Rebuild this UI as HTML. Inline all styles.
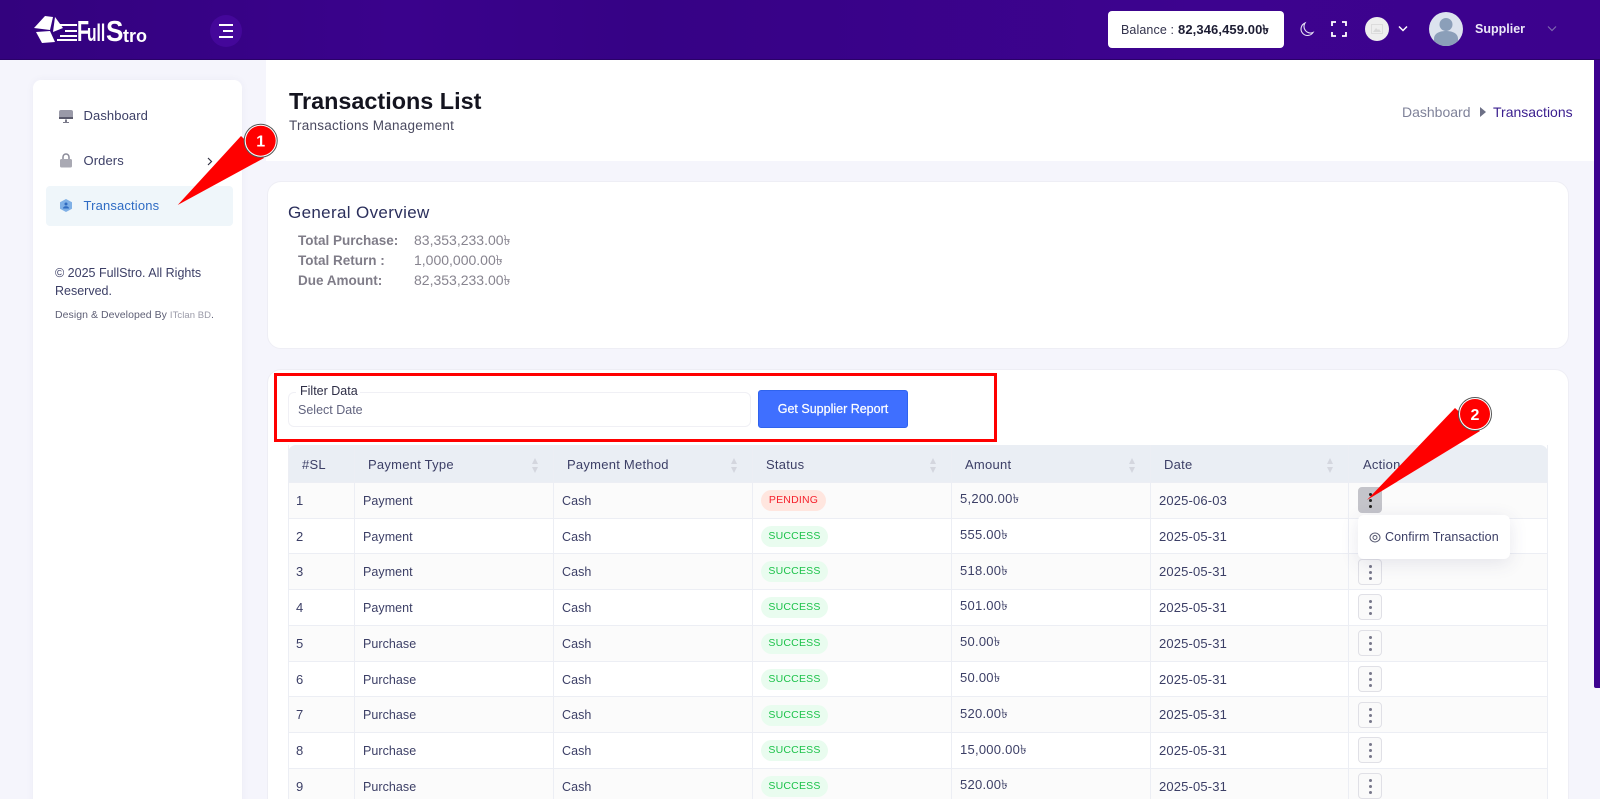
<!DOCTYPE html>
<html lang="en"><head><meta charset="utf-8"><title>Transactions List</title>
<style>
*{box-sizing:border-box}
html,body{margin:0;padding:0;width:1600px;height:799px;overflow:hidden;background:#f5f5fc}
#w{position:relative;width:1600px;height:799px;overflow:hidden;background:#f5f5fc;font-family:"Liberation Sans","Noto Sans CJK SC",sans-serif;color:#3c3f66}
.a{position:absolute;white-space:nowrap}
.t{position:absolute;white-space:nowrap;line-height:16px;font-size:13px;letter-spacing:.25px}
.c{position:absolute;white-space:nowrap;line-height:16px;font-size:12.5px;letter-spacing:.05px}
.d{position:absolute;white-space:nowrap;line-height:16px;font-size:13px;letter-spacing:.15px}
.card{position:absolute;background:#fff;border:1px solid #eeeef5;border-radius:14px}
#hdr{position:absolute;left:0;top:0;width:1600px;height:60px;background:linear-gradient(90deg,#33027e 0,#3a028c 25%,#360285 40%,#3d038f 75%,#3c028d 100%);border-bottom:1px solid #2a0168}
.h{position:absolute;top:446px;height:37px;line-height:37px;font-size:13px;letter-spacing:.25px;color:#3c3f66;white-space:nowrap}
.r{position:absolute;left:288px;width:1260px;height:37px;border-top:1px solid #eceef4}
.v{position:absolute;top:445px;width:1px;height:354px;background:#eceef4}
.b{position:absolute;height:21px;line-height:20px;border-radius:11px;font-size:10.5px;letter-spacing:.2px;text-align:center}
.s{left:761px;width:67px;background:#e9fcef;color:#1cc24a}
.p{left:761px;width:65px;background:#ffe6df;color:#f5222d}
.btn{position:absolute;left:1358px;width:24px;height:26px;background:#fafafa;border:1px solid #e0e0e6;border-radius:4px}
.btn i{position:absolute;left:9.5px;width:3px;height:3px;border-radius:50%;background:#77778a}
.up{position:absolute;width:0;height:0;border-left:3.5px solid transparent;border-right:3.5px solid transparent;border-bottom:6px solid #d4d6de}
.dn{position:absolute;width:0;height:0;border-left:3.5px solid transparent;border-right:3.5px solid transparent;border-top:6px solid #d4d6de}
.l{position:absolute;line-height:40px;color:#fff;font-weight:bold;white-space:nowrap;transform-origin:0 50%}
</style></head><body>
<div id="w">

<div id="hdr"></div>
<svg class="a" style="left:33px;top:14px" width="46" height="30" viewBox="0 0 46 30">
<path d="M1 14L12 2l8 1-3 13z" fill="#fff"/><path d="M22 3l8 11-10 4z" fill="#fff"/><path d="M3 18l14-1 5 11-13 1z" fill="#fff"/>
<path d="M27 10h17v2H27zM32 16h12v2H32zM27 21h17v2H27zM24 25h20v2H24z" fill="#fff"/></svg>
<div class="l" style="left:77px;top:12px;font-size:29px;transform:scaleX(.68)">F</div>
<div class="l" style="left:87px;top:14px;font-size:24px;transform:scaleX(.65)">ull</div>
<div class="l" style="left:106px;top:12px;font-size:29px;transform:scaleX(.9)">S</div>
<div class="l" style="left:123px;top:16px;font-size:18px">tro</div>
<div class="a" style="left:210px;top:15px;width:32px;height:32px;border-radius:50%;background:#44079a"></div>
<div class="a" style="left:219px;top:24px;width:14px;height:2px;background:#fff"></div>
<div class="a" style="left:223px;top:30px;width:10px;height:2px;background:#fff"></div>
<div class="a" style="left:219px;top:36px;width:14px;height:2px;background:#fff"></div>

<div class="a" style="left:1108px;top:11px;width:176px;height:37px;background:#fff;border-radius:4px"></div>
<div class="t" style="left:1121px;top:22px;color:#33334d;font-size:12.5px;letter-spacing:.1px">Balance :</div>
<div class="t" style="left:1178px;top:22px;color:#1d1d33;font-size:13px;font-weight:bold;letter-spacing:.1px">82,346,459.00৳</div>
<svg class="a" style="left:1299px;top:21px" width="16" height="16" viewBox="0 0 16 16"><path d="M6 2a6.500 6.500 0 0 0 8 9.500A6.500 6.500 0 1 1 6 2z" fill="none" stroke="#e8e4f5" stroke-width="1.100"/></svg>
<svg class="a" style="left:1331px;top:21px" width="16" height="16" viewBox="0 0 16 16"><path d="M1 5V1h4M11 1h4v4M15 11v4h-4M5 15H1v-4" fill="none" stroke="#fff" stroke-width="1.800"/></svg>
<div class="a" style="left:1365px;top:17px;width:24px;height:24px;border-radius:50%;background:#eeeeee"></div>
<svg class="a" style="left:1371px;top:23px" width="12" height="12" viewBox="0 0 12 12"><rect x=".5" y="1.500" width="11" height="9" fill="none" stroke="#dcdcdc"/><path d="M2 9l3-4 2 2 1-1 2 3z" fill="#d8d8d8"/></svg>
<svg class="a" style="left:1397px;top:25px" width="12" height="8" viewBox="0 0 12 8"><path d="M2 1.500l4 4 4-4" fill="none" stroke="#fff" stroke-width="1.500"/></svg>
<svg class="a" style="left:1429px;top:12px" width="34" height="34" viewBox="0 0 34 34"><defs><clipPath id="c"><circle cx="17" cy="17" r="17"/></clipPath></defs><circle cx="17" cy="17" r="17" fill="#dce3ee"/><g clip-path="url(#c)" fill="#8b9fb9"><circle cx="17" cy="12.500" r="6.500"/><path d="M5 34v-7c0-6 6-8 12-8s12 2 12 8v7z"/></g></svg>
<div class="t" style="left:1475px;top:21px;color:#ece8f8;font-weight:bold;font-size:12.500px;letter-spacing:0">Supplier</div>
<svg class="a" style="left:1546px;top:25px" width="12" height="8" viewBox="0 0 12 8"><path d="M2 1.500l4 4 4-4" fill="none" stroke="#7f68b0" stroke-width="1.200"/></svg>

<div class="a" style="left:33px;top:80px;width:209px;height:730px;background:#fff;border-radius:8px;box-shadow:0 0 8px rgba(60,60,110,.05)"></div>
<svg class="a" style="left:59px;top:110px" width="14" height="14" viewBox="0 0 14 14"><rect x="0" y="0" width="14" height="9" rx="2" fill="#9a9aa8"/><rect x="0" y="7" width="14" height="2" fill="#5a5a6c"/><path d="M6 9.500h2V12h2v1H4v-1h2z" fill="#7a7a8a"/></svg>
<div class="t" style="left:83.500px;top:108px;font-size:13px;letter-spacing:.1px">Dashboard</div>
<svg class="a" style="left:60px;top:153px" width="12" height="15" viewBox="0 0 12 15"><path d="M3 7V4a3 3 0 0 1 6 0v3" fill="none" stroke="#8a8a98" stroke-width="1.500"/><rect x="0" y="6" width="12" height="8.500" rx="1.500" fill="#a9a9b3"/></svg>
<div class="t" style="left:83.500px;top:153px;font-size:13px;letter-spacing:.1px">Orders</div>
<svg class="a" style="left:206px;top:157px" width="8" height="9" viewBox="0 0 8 9"><path d="M2 1l3.500 3.500L2 8" fill="none" stroke="#333344" stroke-width="1.200"/></svg>
<div class="a" style="left:46px;top:186px;width:187px;height:40px;background:#eff6fa;border-radius:4px"></div>
<svg class="a" style="left:60px;top:199px" width="12" height="13" viewBox="0 0 12 13"><path d="M6 0l6 3.200v6.600L6 13 0 9.800V3.200z" fill="#7fb0e6"/><circle cx="6" cy="5" r="1.500" fill="#2f6bc0"/><path d="M3 9.500c0-1.500 1.500-2.200 3-2.200s3 .7 3 2.200z" fill="#2f6bc0"/></svg>
<div class="t" style="left:83.500px;top:198px;color:#2f6cc4;font-size:13px;letter-spacing:.15px">Transactions</div>
<div class="t" style="left:55px;top:265px;font-size:12.500px;letter-spacing:0">© 2025 FullStro. All Rights</div>
<div class="t" style="left:55px;top:283px;font-size:12.500px;letter-spacing:0">Reserved.</div>
<div class="t" style="left:55px;top:307px;font-size:10.500px;letter-spacing:.05px;color:#5f6076">Design &amp; Developed By <span style="color:#9a9aa8;font-size:9.500px">ITclan BD</span>.</div>

<div class="a" style="left:266px;top:60px;width:1328px;height:101px;background:#fff"></div>
<div class="a" style="left:289px;top:85px;font-size:23.400px;line-height:32px;font-weight:bold;color:#14141f">Transactions List</div>
<div class="t" style="left:289px;top:118px;font-size:13.500px;letter-spacing:.25px;color:#4a4a60">Transactions Management</div>
<div class="t" style="left:1402px;top:104px;font-size:14px;color:#7f8299;letter-spacing:0">Dashboard</div>
<div class="a" style="left:1480px;top:107px;width:0;height:0;border-left:6px solid #6d7086;border-top:5px solid transparent;border-bottom:5px solid transparent"></div>
<div class="t" style="left:1493px;top:104px;font-size:14px;color:#3a1e8e;letter-spacing:0">Transactions</div>

<div class="card" style="left:267px;top:181px;width:1302px;height:168px"></div>
<div class="t" style="left:288px;top:204px;font-size:17px;line-height:17px;color:#2b2f5c;letter-spacing:.35px">General Overview</div>
<div class="t" style="left:298px;top:233px;font-size:13.500px;font-weight:bold;color:#7f7c88;letter-spacing:0">Total Purchase:</div>
<div class="t" style="left:414px;top:232px;font-size:14px;color:#87848f;letter-spacing:0">83,353,233.00৳</div>
<div class="t" style="left:298px;top:253px;font-size:13.500px;font-weight:bold;color:#7f7c88;letter-spacing:0">Total Return :</div>
<div class="t" style="left:414px;top:252px;font-size:14px;color:#87848f;letter-spacing:0">1,000,000.00৳</div>
<div class="t" style="left:298px;top:273px;font-size:13.500px;font-weight:bold;color:#7f7c88;letter-spacing:0">Due Amount:</div>
<div class="t" style="left:414px;top:272px;font-size:14px;color:#87848f;letter-spacing:0">82,353,233.00৳</div>

<div class="card" style="left:267px;top:369px;width:1302px;height:450px"></div>
<div class="a" style="left:288px;top:392px;width:463px;height:35px;border:1px solid #f0f0f5;border-radius:6px"></div>
<div class="a" style="left:296px;top:385px;width:64px;height:12px;background:#fff"></div>
<div class="t" style="left:300px;top:383px;font-size:12.500px;color:#2d2d45;letter-spacing:0">Filter Data</div>
<div class="t" style="left:298px;top:402px;font-size:12.500px;color:#62647f;letter-spacing:0">Select Date</div>
<div class="a" style="left:758px;top:390px;width:150px;height:38px;background:#3f6fff;border-radius:3px;border:1px solid #2f63ee;color:#fff;font-size:12.500px;-webkit-text-stroke:.2px #fff;text-align:center;line-height:36px">Get Supplier Report</div>
<div class="a" style="left:274px;top:373px;width:723px;height:69px;border:3px solid #ff0000"></div>

<div class="a" style="left:288px;top:445px;width:1260px;height:37px;background:#eaeef4;border-radius:8px 8px 0 0"></div>
<div class="r" style="top:482px;background:#fbfbfb"></div>
<div class="r" style="top:518px;background:#fff"></div>
<div class="r" style="top:553px;background:#fbfbfb"></div>
<div class="r" style="top:589px;background:#fff"></div>
<div class="r" style="top:625px;background:#fbfbfb"></div>
<div class="r" style="top:661px;background:#fff"></div>
<div class="r" style="top:696px;background:#fbfbfb"></div>
<div class="r" style="top:732px;background:#fff"></div>
<div class="r" style="top:768px;background:#fbfbfb"></div>
<div class="v" style="left:288px"></div><div class="v" style="left:354px"></div><div class="v" style="left:553px"></div><div class="v" style="left:752px"></div><div class="v" style="left:951px"></div><div class="v" style="left:1150px"></div><div class="v" style="left:1348px"></div><div class="v" style="left:1547px"></div>

<div class="h" style="left:302px">#SL</div>
<div class="h" style="left:368px">Payment Type</div>
<div class="h" style="left:567px">Payment Method</div>
<div class="h" style="left:766px">Status</div>
<div class="h" style="left:965px">Amount</div>
<div class="h" style="left:1164px">Date</div>
<div class="h" style="left:1363px">Action</div>
<div class="up" style="left:532px;top:458px"></div><div class="dn" style="left:532px;top:467px"></div>
<div class="up" style="left:731px;top:458px"></div><div class="dn" style="left:731px;top:467px"></div>
<div class="up" style="left:930px;top:458px"></div><div class="dn" style="left:930px;top:467px"></div>
<div class="up" style="left:1129px;top:458px"></div><div class="dn" style="left:1129px;top:467px"></div>
<div class="up" style="left:1327px;top:458px"></div><div class="dn" style="left:1327px;top:467px"></div>

<div class="d" style="left:296px;top:493px">1</div><div class="c" style="left:363px;top:493px">Payment</div><div class="c" style="left:562px;top:493px">Cash</div><div class="b p" style="top:490px">PENDING</div><div class="t" style="left:960px;top:491px">5,200.00৳</div><div class="d" style="left:1159px;top:493px">2025-06-03</div>
<div class="d" style="left:296px;top:529px">2</div><div class="c" style="left:363px;top:529px">Payment</div><div class="c" style="left:562px;top:529px">Cash</div><div class="b s" style="top:526px">SUCCESS</div><div class="t" style="left:960px;top:527px">555.00৳</div><div class="d" style="left:1159px;top:529px">2025-05-31</div>
<div class="d" style="left:296px;top:564px">3</div><div class="c" style="left:363px;top:564px">Payment</div><div class="c" style="left:562px;top:564px">Cash</div><div class="b s" style="top:561px">SUCCESS</div><div class="t" style="left:960px;top:563px">518.00৳</div><div class="d" style="left:1159px;top:564px">2025-05-31</div>
<div class="d" style="left:296px;top:600px">4</div><div class="c" style="left:363px;top:600px">Payment</div><div class="c" style="left:562px;top:600px">Cash</div><div class="b s" style="top:597px">SUCCESS</div><div class="t" style="left:960px;top:598px">501.00৳</div><div class="d" style="left:1159px;top:600px">2025-05-31</div>
<div class="d" style="left:296px;top:636px">5</div><div class="c" style="left:363px;top:636px">Purchase</div><div class="c" style="left:562px;top:636px">Cash</div><div class="b s" style="top:633px">SUCCESS</div><div class="t" style="left:960px;top:634px">50.00৳</div><div class="d" style="left:1159px;top:636px">2025-05-31</div>
<div class="d" style="left:296px;top:672px">6</div><div class="c" style="left:363px;top:672px">Purchase</div><div class="c" style="left:562px;top:672px">Cash</div><div class="b s" style="top:669px">SUCCESS</div><div class="t" style="left:960px;top:670px">50.00৳</div><div class="d" style="left:1159px;top:672px">2025-05-31</div>
<div class="d" style="left:296px;top:707px">7</div><div class="c" style="left:363px;top:707px">Purchase</div><div class="c" style="left:562px;top:707px">Cash</div><div class="b s" style="top:705px">SUCCESS</div><div class="t" style="left:960px;top:706px">520.00৳</div><div class="d" style="left:1159px;top:707px">2025-05-31</div>
<div class="d" style="left:296px;top:743px">8</div><div class="c" style="left:363px;top:743px">Purchase</div><div class="c" style="left:562px;top:743px">Cash</div><div class="b s" style="top:740px">SUCCESS</div><div class="t" style="left:960px;top:742px">15,000.00৳</div><div class="d" style="left:1159px;top:743px">2025-05-31</div>
<div class="d" style="left:296px;top:779px">9</div><div class="c" style="left:363px;top:779px">Purchase</div><div class="c" style="left:562px;top:779px">Cash</div><div class="b s" style="top:776px">SUCCESS</div><div class="t" style="left:960px;top:777px">520.00৳</div><div class="d" style="left:1159px;top:779px">2025-05-31</div>

<div class="btn" style="top:487px;background:#c4c4ca;border-color:#c4c4ca"><i style="top:5px;background:#222"></i><i style="top:11px;background:#222"></i><i style="top:17px;background:#222"></i></div>
<div class="btn" style="top:559px"><i style="top:5px"></i><i style="top:11px"></i><i style="top:17px"></i></div>
<div class="btn" style="top:594px"><i style="top:5px"></i><i style="top:11px"></i><i style="top:17px"></i></div>
<div class="btn" style="top:630px"><i style="top:5px"></i><i style="top:11px"></i><i style="top:17px"></i></div>
<div class="btn" style="top:666px"><i style="top:5px"></i><i style="top:11px"></i><i style="top:17px"></i></div>
<div class="btn" style="top:702px"><i style="top:5px"></i><i style="top:11px"></i><i style="top:17px"></i></div>
<div class="btn" style="top:737px"><i style="top:5px"></i><i style="top:11px"></i><i style="top:17px"></i></div>
<div class="btn" style="top:773px"><i style="top:5px"></i><i style="top:11px"></i><i style="top:17px"></i></div>

<div class="a" style="left:1358px;top:515px;width:152px;height:44px;background:#fff;border-radius:6px;box-shadow:0 4px 18px rgba(60,60,110,.12)"></div>
<svg class="a" style="left:1369px;top:532px" width="12" height="11" viewBox="0 0 12 11"><ellipse cx="6" cy="5.500" rx="5" ry="4.500" fill="none" stroke="#555870" stroke-width="1"/><circle cx="6" cy="5.500" r="2" fill="none" stroke="#555870" stroke-width="1"/></svg>
<div class="t" style="left:1385px;top:529px;font-size:12.500px;color:#3c3f66;letter-spacing:.1px">Confirm Transaction</div>

<svg class="a" style="left:0;top:0" width="1600" height="799" viewBox="0 0 1600 799">
<path d="M241 136L177.700 205 264 158z" fill="#ff0000"/>
<circle cx="260.700" cy="140.700" r="16.500" fill="#fff" stroke="#555" stroke-width="1"/>
<circle cx="260.700" cy="140.700" r="15" fill="#ff0000"/>
<text x="260.700" y="146.500" text-anchor="middle" font-family="Liberation Sans" font-weight="bold" font-size="16" fill="#fff">1</text>
<path d="M1455 408L1367 500 1480 431z" fill="#ff0000"/>
<circle cx="1475" cy="414" r="16.500" fill="#fff" stroke="#555" stroke-width="1"/>
<circle cx="1475" cy="414" r="15" fill="#ff0000"/>
<text x="1475" y="420" text-anchor="middle" font-family="Liberation Sans" font-weight="bold" font-size="16" fill="#fff">2</text>
</svg>

<div class="a" style="left:1594px;top:60px;width:6px;height:628px;background:#3d0290;border-radius:0 0 0 2px"></div>
</div>
</body></html>
